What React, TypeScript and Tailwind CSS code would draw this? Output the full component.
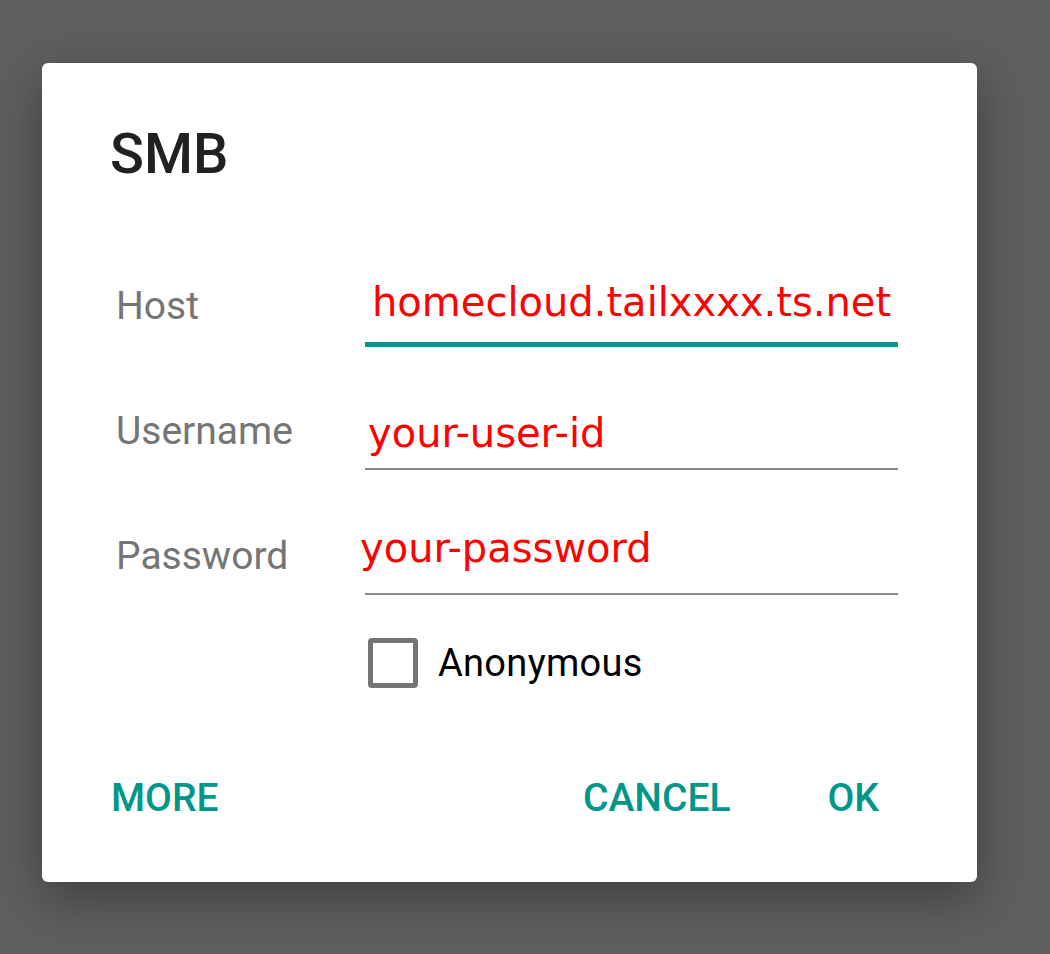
import React from "react";

const roboto = { fontFamily: "Roboto, 'Noto Sans', sans-serif" };

export default function App() {
  return (
    <div
      className="min-h-screen w-full bg-[#5f5f5f] pt-[63px] pl-[42px]"
      style={roboto}
    >
      <div className="w-[935px] h-[819px] bg-white rounded-[6px] shadow-[0_16px_50px_rgba(0,0,0,0.35)] pl-[66px] pr-[79px] pt-[59px] flex flex-col">
        {/* Title */}
        <h1 className="ml-[2px] text-[56px] leading-[64px] font-medium text-[#212121]">
          SMB
        </h1>

        {/* Host */}
        <div className="flex mt-[92px]">
          <div className="w-[257px] shrink-0 pl-[8px] mt-[4px] text-[39px] leading-[48px] text-[#757575]">
            Host
          </div>
          <div className="w-[533px] shrink-0">
            <div className="h-12 pl-[7px] text-[40px] leading-[48px] text-[#ff0000] font-['DejaVu_Sans',sans-serif] whitespace-nowrap">
              homecloud.tailxxxx.ts.net
            </div>
            <div className="mt-[16px] h-[5px] bg-[#009688]" />
          </div>
        </div>

        {/* Username */}
        <div className="flex mt-[60px]">
          <div className="w-[257px] shrink-0 pl-[8px] text-[39px] leading-[48px] text-[#757575]">
            Username
          </div>
          <div className="w-[533px] shrink-0">
            <div className="mt-[2px] h-12 pl-[3px] text-[40px] leading-[48px] text-[#ff0000] font-['DejaVu_Sans',sans-serif] whitespace-nowrap">
              your-user-id
            </div>
            <div className="mt-[11px] h-[2px] bg-[#8a8a8a]" />
          </div>
        </div>

        {/* Password */}
        <div className="flex mt-[54px]">
          <div className="w-[257px] shrink-0 pl-[8px] mt-[8px] text-[39px] leading-[48px] text-[#757575]">
            Password
          </div>
          <div className="w-[533px] shrink-0">
            <div className="h-12 -ml-[5px] text-[40px] leading-[48px] text-[#ff0000] font-['DejaVu_Sans',sans-serif] whitespace-nowrap">
              your-password
            </div>
            <div className="mt-[21px] h-[2px] bg-[#8a8a8a]" />
          </div>
        </div>

        {/* Anonymous */}
        <div className="flex items-center mt-[43px] pl-[260px]">
          <div className="w-[50px] h-[50px] border-[5px] border-[#757575] rounded-[4px]" />
          <span className="ml-[20px] text-[38px] tracking-[0.3px] leading-[48px] text-black">
            Anonymous
          </span>
        </div>

        {/* Buttons */}
        <div className="flex items-center mt-[86px] pr-[19px] text-[39px] leading-[48px] font-medium text-[#009688]">
          <span className="ml-[3px]">MORE</span>
          <span className="ml-auto">CANCEL</span>
          <span className="ml-[97px]">OK</span>
        </div>
      </div>
    </div>
  );
}
